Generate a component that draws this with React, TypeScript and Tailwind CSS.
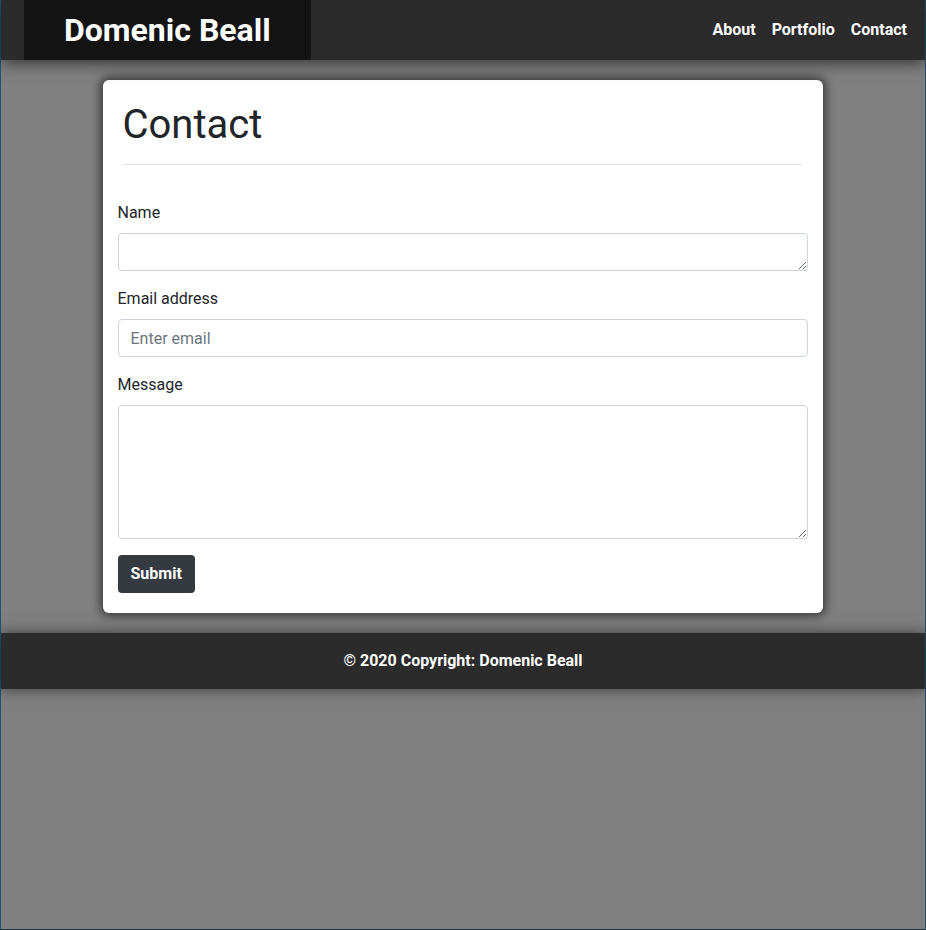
import React from 'react';

const App: React.FC = () => {
  return (
    <div
      className="min-h-[930px] bg-[#808080] border-l border-r border-b border-l-[#1b5877] border-r-[#1b5877] border-b-[#22343d]"
      style={{ fontFamily: 'Roboto, "Liberation Sans", sans-serif' }}
    >
      {/* Navbar */}
      <nav className="relative z-10 h-[60px] bg-[#2b2b2b] flex items-center justify-between shadow-[0_4px_14px_rgba(0,0,0,0.55)]">
        <div className="ml-[23px] h-full bg-[#131313] flex items-center px-[40px]">
          <span className="text-white font-bold text-[32px] leading-none">Domenic Beall</span>
        </div>
        <div className="flex items-center gap-4 pr-[18px] text-white font-bold text-[16px]">
          <a href="#">About</a>
          <a href="#">Portfolio</a>
          <a href="#">Contact</a>
        </div>
      </nav>

      {/* Card */}
      <div className="pt-5 flex justify-center">
        <div className="ml-[-1px] w-[720px] bg-white rounded-md shadow-[0_0_10px_3px_rgba(0,0,0,0.55)] pb-5">
          <div className="px-5 pt-[16px]">
            <h1 className="text-[40px] leading-[48px] font-normal text-[#212529] pt-[5px] pb-[15px] border-b border-[#e5e5e5]">
              Contact
            </h1>
          </div>
          <form className="px-[15px] pt-[36px] text-[#212529]">
            <div className="mb-4">
              <label className="block text-[16px] leading-6 mb-2">Name</label>
              <textarea
                rows={1}
                className="block w-full h-[38px] border border-[#ced4da] rounded px-3 py-1.5 text-[16px] outline-none resize-y"
              />
            </div>
            <div className="mb-4">
              <label className="block text-[16px] leading-6 mb-2">Email address</label>
              <input
                type="email"
                placeholder="Enter email"
                className="block w-full h-[38px] border border-[#ced4da] rounded px-3 text-[16px] outline-none placeholder:text-[#6c757d]"
              />
            </div>
            <div className="mb-4">
              <label className="block text-[16px] leading-6 mb-2">Message</label>
              <textarea
                className="block w-full h-[134px] border border-[#ced4da] rounded px-3 py-1.5 text-[16px] outline-none resize-y"
              />
            </div>
            <button
              type="button"
              className="h-[38px] px-[13px] bg-[#343a40] text-white font-bold text-[16px] rounded"
            >
              Submit
            </button>
          </form>
        </div>
      </div>

      {/* Footer */}
      <footer className="mt-5 h-[56px] bg-[#2b2b2b] flex items-center justify-center shadow-[0_0_14px_rgba(0,0,0,0.55)]">
        <span className="text-white font-bold text-[16px]">© 2020 Copyright: Domenic Beall</span>
      </footer>
    </div>
  );
};

export default App;
